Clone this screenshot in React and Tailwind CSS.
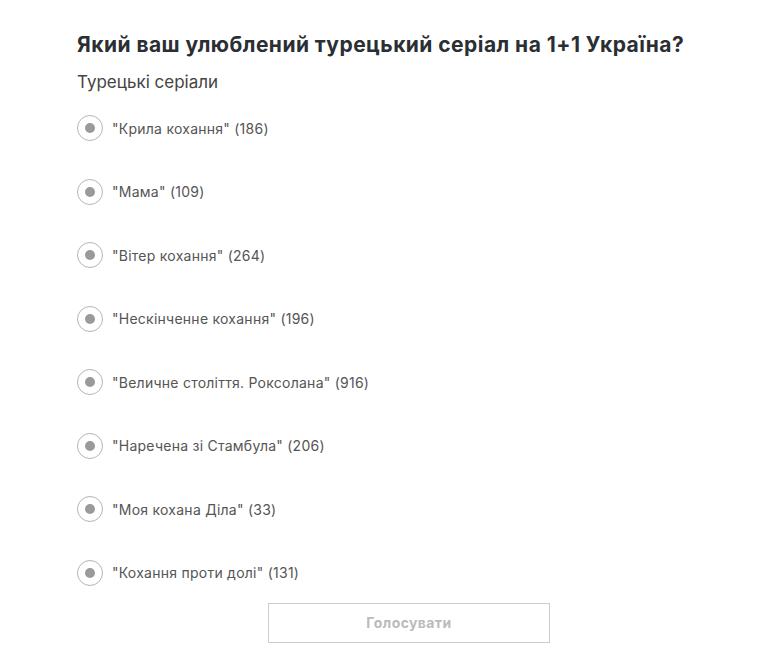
import React from "react";

const options = [
  '"Крила кохання" (186)',
  '"Мама" (109)',
  '"Вітер кохання" (264)',
  '"Нескінченне кохання" (196)',
  '"Величне століття. Роксолана" (916)',
  '"Наречена зі Стамбула" (206)',
  '"Моя кохана Діла" (33)',
  '"Кохання проти долі" (131)',
];

export default function App() {
  return (
    <div className="min-h-[648px] bg-white pl-[77px] pt-[30px]" style={{ fontFamily: 'Inter, "Liberation Sans", Arial, sans-serif' }}>
      <div className="w-[664px]">
        <h1 className="text-[21px] leading-[30px] font-bold tracking-[0.45px] text-[#2b2f33]">
          Який ваш улюблений турецький серіал на 1+1 Україна?
        </h1>
        <div className="mt-[12px] text-[17px] leading-[20px] text-[#444]">Турецькі серіали</div>
        <div className="mt-[23px] flex flex-col gap-[37.57px]">
          {options.map((o) => (
            <label key={o} className="flex h-[26px] items-center">
              <span className="flex h-[26px] w-[26px] shrink-0 items-center justify-center rounded-full border border-[#b5b5b5]">
                <span className="h-[10px] w-[10px] rounded-full bg-[#9a9a9a]" />
              </span>
              <span className="ml-[9px] text-[14px] tracking-[0.25px] text-[#555]">{o}</span>
            </label>
          ))}
        </div>
        <div className="mt-[17px] flex justify-center">
          <button className="h-[40px] w-[282px] border border-[#cccccc] bg-white text-[14px] font-bold tracking-[0.4px] text-[#bbbbbb]">
            Голосувати
          </button>
        </div>
      </div>
    </div>
  );
}
